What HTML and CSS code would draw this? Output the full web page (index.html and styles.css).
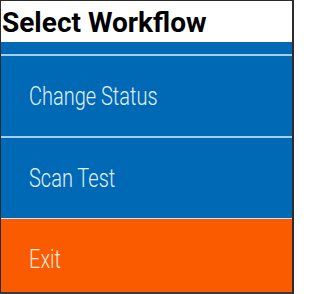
FILE: index.html
```html
<!DOCTYPE html>
<html>
<head>
<meta charset="utf-8">
<link rel="stylesheet" href="styles.css">
</head>
<body>
<div class="frame">
  <div class="header">Select Workflow</div>
  <div class="list">
    <div class="item"><span class="label">Change Status</span></div>
    <div class="item"><span class="label">Scan Test</span></div>
    <div class="item exit"><span class="label">Exit</span></div>
  </div>
</div>
</body>
</html>
```
FILE: styles.css
```css
html, body {
  margin: 0;
  padding: 0;
  background: #ffffff;
}
.frame {
  width: 294px;
  height: 294px;
  box-sizing: border-box;
  border-top: 1px solid #2b2b2b;
  border-left: 1px solid #2b2b2b;
  border-right: 2px solid #2b2b2b;
  border-bottom: 2px solid #3a3a3a;
  display: flex;
  flex-direction: column;
  overflow: hidden;
  font-family: Roboto, "Liberation Sans", sans-serif;
}
.header {
  height: 41px;
  flex: none;
  background: #ffffff;
  color: #000000;
  font-weight: 700;
  font-size: 28px;
  line-height: 43px;
  padding-left: 1px;
  white-space: nowrap;
  overflow: hidden;
}
.list {
  flex: 1;
  background: #0069b6;
  padding-top: 12px;
  overflow: hidden;
}
.item {
  height: 80px;
  border-top: 2px solid #a6cdef;
  display: flex;
  align-items: center;
  padding-left: 28px;
  font-size: 25px;
  font-weight: 300;
  color: #e2f0fc;
  background: #0069b6;
}
.label {
  display: inline-block;
  white-space: nowrap;
  transform: scaleX(0.8);
  transform-origin: left center;
}
.item.exit {
  background: #fa5a00;
  color: #ffeadb;
  border-top: 1px solid #cfe3f5;
}
```
